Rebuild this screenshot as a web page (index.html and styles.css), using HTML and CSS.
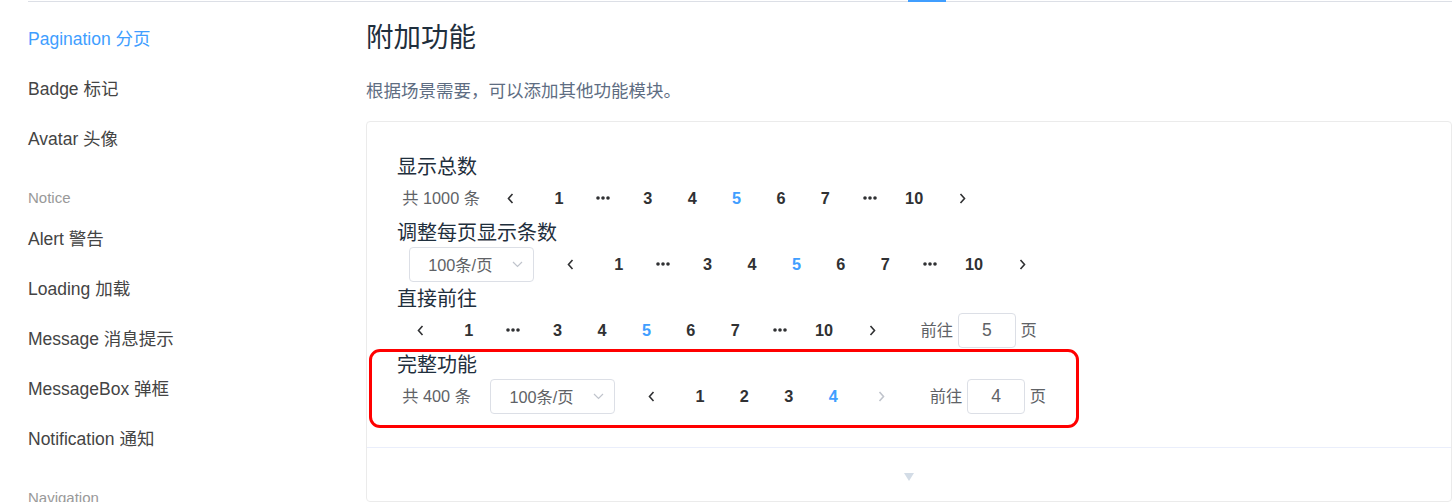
FILE: index.html
```html
<!DOCTYPE html>
<html lang="zh-CN">
<head>
    <meta charset="UTF-8">
    <meta name="viewport" content="width=device-width, initial-scale=1.0">
    <title>Pagination 分页</title>
    <link rel="stylesheet" href="styles.css">
</head>
<body>
<div class="topbar">
    <div class="rule rule-left"></div>
    <div class="tab-active"></div>
    <div class="rule rule-right"></div>
</div>
<div class="layout">
    <nav class="sidebar">
        <div class="nav-item active">Pagination 分页</div>
        <div class="nav-item">Badge 标记</div>
        <div class="nav-item">Avatar 头像</div>
        <div class="nav-group-title">Notice</div>
        <div class="nav-item">Alert 警告</div>
        <div class="nav-item">Loading 加载</div>
        <div class="nav-item">Message 消息提示</div>
        <div class="nav-item">MessageBox 弹框</div>
        <div class="nav-item">Notification 通知</div>
        <div class="nav-group-title">Navigation</div>
    </nav>
    <main class="main">
        <h3 class="title">附加功能</h3>
        <p class="desc">根据场景需要，可以添加其他功能模块。</p>
        <div class="demo-card">
            <div class="demo-source">
                <div class="block">
                    <span class="demonstration">显示总数</span>
                    <div class="pagination">
                        <span class="total">共 1000 条</span>
                        <button class="btn btn-prev"><svg width="7" height="11" viewBox="0 0 7 11"><path d="M5.5 1 L1.5 5.5 L5.5 10" fill="none" stroke="currentColor" stroke-width="1.6"/></svg></button>
                        <ul class="pager">
                            <li>1</li>
                            <li class="more"><svg width="14" height="4" viewBox="0 0 14 4"><circle cx="2" cy="2" r="1.8"/><circle cx="7" cy="2" r="1.8"/><circle cx="12" cy="2" r="1.8"/></svg></li>
                            <li>3</li>
                            <li>4</li>
                            <li class="current">5</li>
                            <li>6</li>
                            <li>7</li>
                            <li class="more"><svg width="14" height="4" viewBox="0 0 14 4"><circle cx="2" cy="2" r="1.8"/><circle cx="7" cy="2" r="1.8"/><circle cx="12" cy="2" r="1.8"/></svg></li>
                            <li>10</li>
                        </ul>
                        <button class="btn btn-next"><svg width="7" height="11" viewBox="0 0 7 11"><path d="M1.5 1 L5.5 5.5 L1.5 10" fill="none" stroke="currentColor" stroke-width="1.6"/></svg></button>
                    </div>
                </div>
                <div class="block">
                    <span class="demonstration">调整每页显示条数</span>
                    <div class="pagination">
                        <span class="sizes">
                            <span class="select">100条/页<svg class="caret" width="11" height="7" viewBox="0 0 11 7"><path d="M1 1 L5.5 5.5 L10 1" fill="none" stroke="currentColor" stroke-width="1.2"/></svg></span>
                        </span>
                        <button class="btn btn-prev"><svg width="7" height="11" viewBox="0 0 7 11"><path d="M5.5 1 L1.5 5.5 L5.5 10" fill="none" stroke="currentColor" stroke-width="1.6"/></svg></button>
                        <ul class="pager">
                            <li>1</li>
                            <li class="more"><svg width="14" height="4" viewBox="0 0 14 4"><circle cx="2" cy="2" r="1.8"/><circle cx="7" cy="2" r="1.8"/><circle cx="12" cy="2" r="1.8"/></svg></li>
                            <li>3</li>
                            <li>4</li>
                            <li class="current">5</li>
                            <li>6</li>
                            <li>7</li>
                            <li class="more"><svg width="14" height="4" viewBox="0 0 14 4"><circle cx="2" cy="2" r="1.8"/><circle cx="7" cy="2" r="1.8"/><circle cx="12" cy="2" r="1.8"/></svg></li>
                            <li>10</li>
                        </ul>
                        <button class="btn btn-next"><svg width="7" height="11" viewBox="0 0 7 11"><path d="M1.5 1 L5.5 5.5 L1.5 10" fill="none" stroke="currentColor" stroke-width="1.6"/></svg></button>
                    </div>
                </div>
                <div class="block">
                    <span class="demonstration">直接前往</span>
                    <div class="pagination">
                        <button class="btn btn-prev"><svg width="7" height="11" viewBox="0 0 7 11"><path d="M5.5 1 L1.5 5.5 L5.5 10" fill="none" stroke="currentColor" stroke-width="1.6"/></svg></button>
                        <ul class="pager">
                            <li>1</li>
                            <li class="more"><svg width="14" height="4" viewBox="0 0 14 4"><circle cx="2" cy="2" r="1.8"/><circle cx="7" cy="2" r="1.8"/><circle cx="12" cy="2" r="1.8"/></svg></li>
                            <li>3</li>
                            <li>4</li>
                            <li class="current">5</li>
                            <li>6</li>
                            <li>7</li>
                            <li class="more"><svg width="14" height="4" viewBox="0 0 14 4"><circle cx="2" cy="2" r="1.8"/><circle cx="7" cy="2" r="1.8"/><circle cx="12" cy="2" r="1.8"/></svg></li>
                            <li>10</li>
                        </ul>
                        <button class="btn btn-next"><svg width="7" height="11" viewBox="0 0 7 11"><path d="M1.5 1 L5.5 5.5 L1.5 10" fill="none" stroke="currentColor" stroke-width="1.6"/></svg></button>
                        <span class="jump">前往<span class="editor">5</span>页</span>
                    </div>
                </div>
                <div class="block">
                    <span class="demonstration">完整功能</span>
                    <div class="pagination">
                        <span class="total">共 400 条</span>
                        <span class="sizes">
                            <span class="select">100条/页<svg class="caret" width="11" height="7" viewBox="0 0 11 7"><path d="M1 1 L5.5 5.5 L10 1" fill="none" stroke="currentColor" stroke-width="1.2"/></svg></span>
                        </span>
                        <button class="btn btn-prev"><svg width="7" height="11" viewBox="0 0 7 11"><path d="M5.5 1 L1.5 5.5 L5.5 10" fill="none" stroke="currentColor" stroke-width="1.6"/></svg></button>
                        <ul class="pager">
                            <li>1</li>
                            <li>2</li>
                            <li>3</li>
                            <li class="current">4</li>
                        </ul>
                        <button class="btn btn-next disabled"><svg width="7" height="11" viewBox="0 0 7 11"><path d="M1.5 1 L5.5 5.5 L1.5 10" fill="none" stroke="currentColor" stroke-width="1.6"/></svg></button>
                        <span class="jump">前往<span class="editor">4</span>页</span>
                    </div>
                </div>
                <div class="highlight"></div>
            </div>
            <div class="demo-control">
                <span class="caret-bottom"></span>
            </div>
        </div>
    </main>
</div>
</body>
</html>
```

FILE: styles.css
```css
*, *:before, *:after {
    box-sizing: border-box;
}

html, body {
    height: 502px;
    overflow: hidden;
}

body {
    margin: 0;
    font-family: "Liberation Sans", Arial, "Noto Sans CJK SC", sans-serif;
    color: #1f2f3d;
    background-color: #ffffff;
}

/* top tab strip */
.topbar {
    display: flex;
    height: 2px;
    margin-left: 28px;
}

.topbar .rule {
    margin-top: 1px;
    height: 1px;
    background-color: #dcdfe6;
}

.rule-left {
    width: 880px;
}

.rule-right {
    flex: 1;
}

.tab-active {
    width: 38px;
    height: 2px;
    background-color: #409eff;
}

.layout {
    display: flex;
}

/* side navigation */
.sidebar {
    width: 366px;
    flex-shrink: 0;
    padding: 12px 0 0 28px;
}

.nav-item {
    height: 50px;
    line-height: 50px;
    font-size: 17.5px;
    color: #444444;
    white-space: nowrap;
}

.nav-item.active {
    color: #409eff;
}

.nav-group-title {
    margin-top: 17.75px;
    line-height: 32.5px;
    font-size: 15px;
    color: #999999;
}

/* main column */
.main {
    flex: 1;
    min-width: 0;
}

.title {
    margin: 18px 0 0;
    font-size: 27.5px;
    font-weight: 400;
    line-height: 36px;
    color: #1f2f3d;
}

.desc {
    margin: 22px 0 0;
    font-size: 17.5px;
    line-height: 26px;
    color: #5e6d82;
}

.demo-card {
    margin-top: 17px;
    border: 1px solid #ebebeb;
    border-radius: 4px;
}

.demo-source {
    position: relative;
    padding: 30px 30px 31px;
}

.block {
    padding-top: 4px;
}

.demonstration {
    display: block;
    font-size: 20px;
    line-height: 22px;
    color: #1f2f3d;
}

/* pagination */
.pagination {
    display: flex;
    align-items: center;
    height: 40px;
    padding: 2.5px 5.25px;
    font-size: 16.25px;
    font-weight: 700;
    color: #303133;
    white-space: nowrap;
}

.pagination .total {
    min-width: 44.4px;
    margin-right: 12.5px;
    line-height: 35px;
    font-weight: 400;
    color: #606266;
}

.btn {
    display: flex;
    align-items: center;
    justify-content: center;
    min-width: 44.4px;
    height: 35px;
    border: none;
    background: transparent;
    color: #303133;
}

.btn-prev {
    padding: 0 15px 0 7.5px;
}

.btn-next {
    padding: 0 7.5px 0 15px;
}

.btn.disabled {
    color: #c0c4cc;
}

.pager {
    display: flex;
    margin: 0;
    padding: 0;
    list-style: none;
}

.pager li {
    min-width: 44.4px;
    height: 35px;
    line-height: 35px;
    padding: 0 5px;
    text-align: center;
}

.pager li.current {
    color: #409eff;
}

.pager li.more {
    display: flex;
    align-items: center;
    justify-content: center;
}

.pager li.more svg {
    fill: #303133;
}

.sizes {
    margin-right: 12.5px;
}

.select {
    display: flex;
    align-items: center;
    justify-content: space-between;
    width: 125px;
    height: 35px;
    margin: 0 6.25px;
    padding: 0 10px 0 18.75px;
    border: 1px solid #dcdfe6;
    border-radius: 4px;
    font-weight: 400;
    color: #606266;
}

.select .caret {
    color: #c0c4cc;
}

.jump {
    display: flex;
    align-items: center;
    margin-left: 30px;
    line-height: 35px;
    font-weight: 400;
    color: #606266;
}

.editor {
    width: 57.5px;
    height: 35px;
    margin: 0 5px;
    line-height: 33px;
    border: 1px solid #dcdfe6;
    border-radius: 4px;
    text-align: center;
    font-size: 17.5px;
}

/* annotation frame */
.highlight {
    position: absolute;
    left: 2px;
    top: 227px;
    width: 710px;
    height: 79px;
    border: 3px solid #ff0000;
    border-radius: 11px;
}

.demo-control {
    display: flex;
    align-items: center;
    justify-content: center;
    height: 54px;
    padding-top: 4px;
    border-top: 1px solid #eaeefb;
}

.caret-bottom {
    width: 0;
    height: 0;
    border-left: 5px solid transparent;
    border-right: 5px solid transparent;
    border-top: 8px solid #d3dce6;
}
```
